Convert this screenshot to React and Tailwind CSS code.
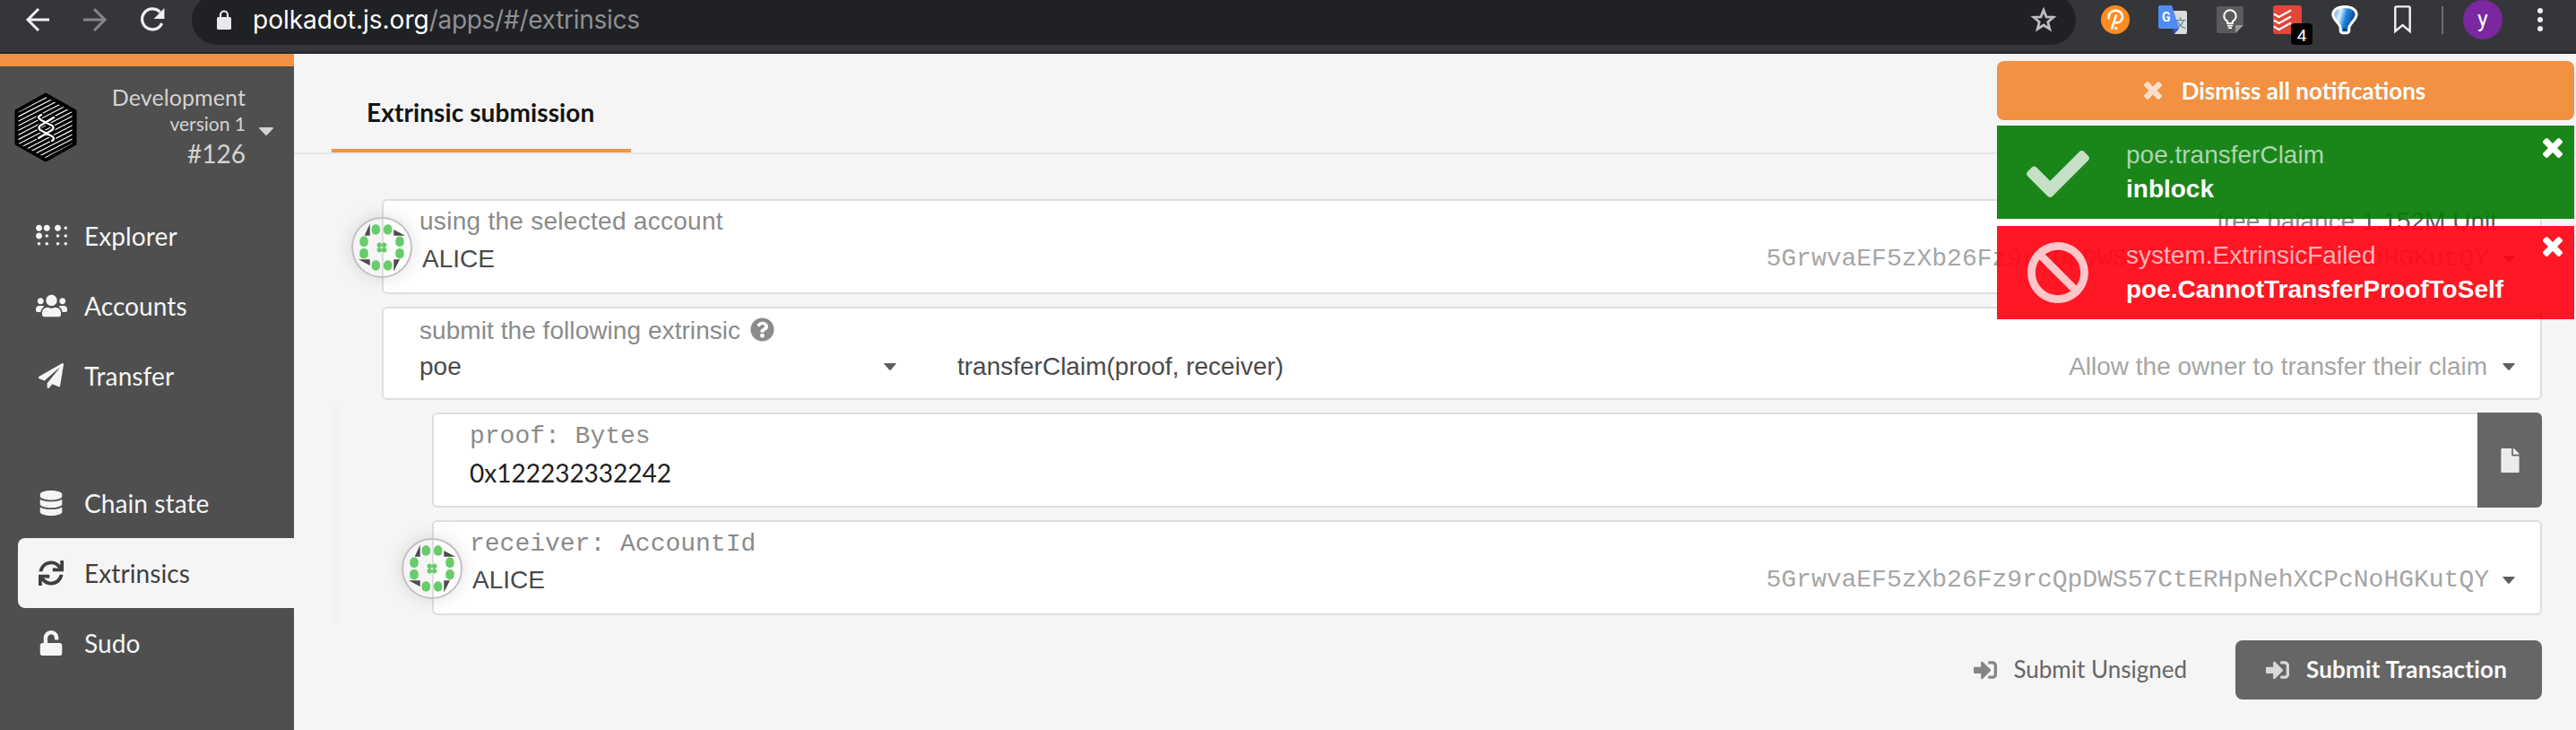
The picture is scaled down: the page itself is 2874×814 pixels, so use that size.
import React from 'react';
import {
  FaBraille,
  FaUsers,
  FaPaperPlane,
  FaDatabase,
  FaSync,
  FaUnlock,
  FaSignInAlt,
  FaFile,
  FaQuestionCircle,
  FaCheck,
  FaBan,
} from 'react-icons/fa';

const ADDRESS = '5GrwvaEF5zXb26Fz9rcQpDWS57CtERHpNehXCPcNoHGKutQY';

/* ---------- browser toolbar ---------- */

function Toolbar() {
  return (
    <header className="flex h-[60px] shrink-0 items-start overflow-hidden border-b-2 border-[#26272b] bg-[#35363a] font-['Inter',sans-serif]">
      <div className="flex h-[44px] items-center pl-[28px]">
        <svg className="mr-[36px] h-[28px] w-[28px]" viewBox="0 0 28 28" fill="none" stroke="#f1f1f1" strokeWidth="3">
          <path d="M27 14H3M15 2 3 14l12 12" />
        </svg>
        <svg className="mr-[36px] h-[28px] w-[28px]" viewBox="0 0 28 28" fill="none" stroke="#85868a" strokeWidth="3">
          <path d="M1 14h24M13 2l12 12-12 12" />
        </svg>
        <svg className="mr-[30px] h-[28px] w-[28px]" viewBox="0 0 28 28">
          <path d="M22.5 5.6A11.5 11.5 0 1 0 24.6 18" fill="none" stroke="#f1f1f1" strokeWidth="3.2" />
          <path d="M27.4 1v12H15.6z" fill="#f1f1f1" />
        </svg>
      </div>
      <div className="-mt-[6px] flex h-[56px] w-[2102px] items-center rounded-full bg-[#202124] pr-[21px] pl-[28px]">
        <svg className="h-[22px] w-[16px] shrink-0" viewBox="0 0 16 22">
          <path d="M4 10V5.5a4 4 0 0 1 8 0V10" fill="none" stroke="#e8e8e8" strokeWidth="2.2" />
          <rect y="8" width="16" height="14" rx="1.6" fill="#e8e8e8" />
        </svg>
        <span className="ml-[24px] text-[28px] leading-[36px] text-white">polkadot.js.org</span>
        <span className="grow text-[28px] leading-[36px] tracking-[-0.28px] text-[#8f9094]">/apps/#/extrinsics</span>
        <svg className="h-[30px] w-[30px] shrink-0" viewBox="0 0 30 30" fill="none" stroke="#bdbdbd" strokeWidth="2.8">
          <path d="M15 4.2l3 7.6 8 .5-6.200 5.200 2 7.900-6.800-4.400-6.800 4.400 2-7.900L4 12.300l8-.5z" />
        </svg>
      </div>
      <div className="flex h-[44px] items-center pl-[28px]">
        <svg className="h-[32px] w-[32px]" viewBox="0 0 32 32" fill="none">
          <circle cx="16" cy="16" r="16" fill="#ff8c22" />
          <path
            d="M8.600 14.400C8 9.500 11.800 5.700 16.400 5.700c4.400 0 7.600 3 7.600 6.900 0 4.300-3.300 7-7.400 6.800M16.800 11.300 12.200 25.600"
            stroke="#fff"
            strokeWidth="2.600"
            strokeLinecap="round"
          />
          <circle cx="16.800" cy="25.400" r="1.700" fill="#fff" />
        </svg>
        <svg className="ml-[32px] h-[32px] w-[32px]" viewBox="0 0 32 32">
          <path d="M13 6h17a2 2 0 0 1 2 2v22a2 2 0 0 1-2 2H18z" fill="#dcdcdc" />
          <text x="18" y="24" fontSize="13" fill="#5a8388" fontFamily="'Noto Sans CJK SC',sans-serif">文</text>
          <path d="M16 26h7l-5 6z" fill="#3a4fc4" />
          <path d="M1.500 0H15l8.500 26H2a2 2 0 0 1-2-2V1.500A1.500 1.500 0 0 1 1.500 0z" fill="#4f8df5" />
          <text x="4" y="18" fontSize="14" fontWeight="700" fill="#fff" fontFamily="Roboto,sans-serif">G</text>
        </svg>
        <svg className="ml-[32px] h-[32px] w-[32px]" viewBox="0 0 32 32" fill="none">
          <path d="M2.500 1h27a1.500 1.500 0 0 1 1.500 1.500V22l-9 9H2.500A1.500 1.500 0 0 1 1 29.500v-27A1.500 1.500 0 0 1 2.500 1z" fill="#5b5b5b" />
          <path d="M31 22l-9 9v-7.500a1.500 1.500 0 0 1 1.500-1.500z" fill="#9b9b9b" />
          <path d="M13 20v-2.300c-2-1.200-3.700-3.200-3.700-5.700a6.700 6.700 0 0 1 13.400 0c0 2.500-1.700 4.500-3.700 5.700V20z" stroke="#fff" strokeWidth="2" />
          <path d="M13 22.600h6M14 25.200h4" stroke="#fff" strokeWidth="1.800" />
        </svg>
        <div className="relative ml-[32px] h-[32px] w-[32px]">
          <svg className="h-[32px] w-[32px]" viewBox="0 0 32 32" fill="none" stroke="#fff" strokeWidth="2.200">
            <rect width="32" height="32" rx="3" fill="#e24539" stroke="none" />
            <path d="M1 9.500 6.500 13 20 5.500M1 16.500 6.500 20 20 12.500M1 23.500 6.500 27 20 19.500" />
          </svg>
          <span className="absolute top-[20px] left-[20px] h-[24px] w-[24px] rounded-[4px] bg-black text-center font-['Roboto'] text-[19px] leading-[27px] text-white">
            4
          </span>
        </div>
        <svg className="ml-[32px] h-[34px] w-[32px]" viewBox="0 0 32 34">
          <defs>
            <linearGradient id="balloon" x1="0" y1="0" x2="1" y2="0.300">
              <stop offset="0" stopColor="#2f8fe0" />
              <stop offset="0.350" stopColor="#dff0fc" />
              <stop offset="0.600" stopColor="#1c86e0" />
              <stop offset="1" stopColor="#0a3f8c" />
            </linearGradient>
          </defs>
          <path
            d="M16 2.500c8 0 13.200 3.600 13.200 8.500 0 3.800-3.300 7.200-6.200 10.600-1.200 1.500-2.200 3-2.200 4.900v2.600c0 1.600-1.100 2.600-2.500 2.600h-4.600c-1.400 0-2.500-1-2.500-2.600v-2.600c0-1.900-1-3.400-2.200-4.900C6.100 18.200 2.800 14.800 2.800 11 2.800 6.100 8 2.500 16 2.500z"
            fill="url(#balloon)"
            stroke="#fff"
            strokeWidth="3"
          />
          <path d="M14 26.500h4v3h-4z" fill="#123a6b" />
        </svg>
        <svg className="ml-[39px] h-[32px] w-[20px]" viewBox="0 0 20 32" fill="none" stroke="#f1f1f1" strokeWidth="2.400">
          <path d="M2.500 1.400h14a1.200 1.200 0 0 1 1.200 1.200V29L9.500 22 1.300 29V2.600a1.200 1.200 0 0 1 1.200-1.200z" />
        </svg>
        <div className="ml-[33px] h-[31px] w-[2px] bg-[#6d6e72]" />
        <div className="ml-[22px] flex h-[44px] w-[44px] items-center justify-center rounded-full bg-[#7b279f]">
          <span className="font-['Roboto'] text-[25px] leading-[40px] text-white">y</span>
        </div>
        <svg className="ml-[39px] h-[28px] w-[6px]" viewBox="0 0 6 28" fill="#f1f1f1">
          <circle cx="3" cy="4" r="3" />
          <circle cx="3" cy="14" r="3" />
          <circle cx="3" cy="24" r="3" />
        </svg>
      </div>
    </header>
  );
}

/* ---------- sidebar ---------- */

const STRIPES = Array.from({ length: 24 }, (_, i) => i * 5.1 - 6);

function ChainLogo() {
  return (
    <svg className="h-[78px] w-[70px]" viewBox="0 0 70 78">
      <defs>
        <clipPath id="hex-inner">
          <path d="M35 5 64.500 22v35L35 73 4.500 57V22z" />
        </clipPath>
      </defs>
      <path d="M35 2 68 20.500v37L35 76 2 57.500v-37z" fill="#000" stroke="#000" strokeWidth="3" strokeLinejoin="round" />
      <g clipPath="url(#hex-inner)" stroke="#fff" strokeWidth="1.150">
        {STRIPES.map((y) => (
          <path key={y} d={`M0 ${y + 20} 70 ${y - 16}`} />
        ))}
      </g>
      <g fill="none" strokeLinecap="round" strokeLinejoin="round">
        <path d="M30 25c-4 2-4 3 0 6l12 6q3 2.500 0 5L27 51M44 28 29 37q-3 2.500 0 5l13 7q4 3 0 5" stroke="#000" strokeWidth="5" />
        <path d="M30 25c-4 2-4 3 0 6l12 6q3 2.500 0 5L27 51M44 28 29 37q-3 2.500 0 5l13 7q4 3 0 5" stroke="#fff" strokeWidth="2.400" />
      </g>
    </svg>
  );
}

function NavItem({ icon: Icon, label, active, wide }) {
  return (
    <a
      className={
        active
          ? 'ml-[20px] flex h-[78px] items-center rounded-l-[8px] bg-[#f5f5f5] pl-[19px] text-[#3f3f3f]'
          : 'ml-[20px] flex h-[78px] items-center pl-[19px] text-[#f5f5f5]'
      }
    >
      <span className="flex w-[36px] justify-center">
        <Icon className={wide ? 'h-[28px] w-[35px] shrink-0' : 'h-[28px] w-[28px] shrink-0'} />
      </span>
      <span className="ml-[19px] text-[28px] leading-[34px] tracking-[0.100px]">{label}</span>
    </a>
  );
}

function Sidebar() {
  return (
    <aside className="flex w-[328px] shrink-0 flex-col border-t-[14px] border-[#f19141] bg-[#4f4f4f] font-['Lato',sans-serif]">
      <div className="flex h-[150px] shrink-0 items-start pl-[16px]">
        <div className="mt-[29px]">
          <ChainLogo />
        </div>
        <div className="mt-[19px] w-[188px] text-right text-[#d3d3d3]">
          <div className="text-[25px] leading-[31px] tracking-[0.100px]">Development</div>
          <div className="text-[21px] leading-[28px]">version 1</div>
          <div className="text-[28px] leading-[38px]">#126</div>
        </div>
        <svg className="mt-[68px] ml-[15px] h-[9px] w-[16px]" viewBox="0 0 16 9" fill="#d3d3d3">
          <path d="M1 0h14q1.500.3.500 1.500L9 8.500q-1 .9-2 0L.5 1.500Q-.5.300 1 0z" />
        </svg>
      </div>
      <nav className="flex flex-col">
        <NavItem icon={FaBraille} label="Explorer" wide />
        <NavItem icon={FaUsers} label="Accounts" wide />
        <NavItem icon={FaPaperPlane} label="Transfer" />
        <div className="h-[64px]" />
        <NavItem icon={FaDatabase} label="Chain state" />
        <NavItem icon={FaSync} label="Extrinsics" active />
        <NavItem icon={FaUnlock} label="Sudo" />
      </nav>
    </aside>
  );
}

/* ---------- form parts ---------- */

function Caret() {
  return (
    <svg className="h-[8px] w-[14px] shrink-0" viewBox="0 0 14 8" fill="#5f5f5f">
      <path d="M.8 0h12.400q1 .3.300 1.100L7.800 7.400q-.8.800-1.600 0L.5 1.100Q-.2.300.8 0z" />
    </svg>
  );
}

function Cross({ className }) {
  return (
    <svg className={className} viewBox="302 366 1188 1188" fill="currentColor">
      <path d="M1490 1322q0 40-28 68l-136 136q-28 28-68 28t-68-28l-294-294-294 294q-28 28-68 28t-68-28l-136-136q-28-28-28-68t28-68l294-294-294-294q-28-28-28-68t28-68l136-136q28-28 68-28t68 28l294 294 294-294q28-28 68-28t68 28l136 136q28 28 28 68t-28 68l-294 294 294 294q28 28 28 68z" />
    </svg>
  );
}

function Identicon() {
  return (
    <div className="absolute top-[18px] -left-[36px] h-[68px] w-[68px] rounded-full border-2 border-[#c1c1c1] shadow-[0_0_20px_rgba(0,0,0,0.130)]">
      <svg className="h-[64px] w-[64px]" viewBox="-32 -32 64 64">
        <g fill="#67cc6a">
          {[[-6.7, -20], [6.7, -20], [-6.7, 20], [6.7, 20], [-20, -6.7], [-20, 6.7], [20, -6.7], [20, 6.7]].map(([x, y]) => (
            <rect key={`${x},${y}`} x={x - 4.7} y={y - 5.7} width="9.400" height="11.400" rx="4.600" />
          ))}
          {[[-2.7, -2.7], [2.7, -2.7], [-2.7, 2.7], [2.7, 2.7]].map(([x, y]) => (
            <circle key={`${x},${y}`} cx={x} cy={y} r="2.700" />
          ))}
        </g>
        <path
          d="M-19.300-13.300h6v-13.300zM13.300-20v6.700H26zM13.300 13.300H20l-6.700 13.300zM-26 13.300h12.700V20z"
          fill="#4c4c4c"
        />
      </svg>
    </div>
  );
}

/* ---------- content ---------- */

function Content() {
  return (
    <main className="flex grow flex-col bg-[#f5f5f5] font-['Liberation_Sans',Arial,sans-serif] text-[28px] leading-[32px]">
      <div className="flex h-[112px] items-end border-b-2 border-[#e6e6e6] pl-[42px]">
        <div className="h-[70px] w-[334px] border-b-4 border-[#f19141] pl-[39px] font-['Lato'] leading-[50px] font-bold tracking-[0.100px] text-[#141414]">
          Extrinsic submission
        </div>
      </div>

      <div className="flex flex-col pt-[50px] pr-[38px] pl-[42px]">
        <div className="relative ml-[56px] h-[106px] rounded-[6px] border-2 border-[#dededf] bg-white pt-[7px] pr-[28px] pl-[40px]">
          <Identicon />
          <div className="flex justify-between">
            <span className="tracking-[0.280px] text-[#8b8b8b]">using the selected account</span>
            <span className="pr-[20px] text-[#8b8b8b]">
              free balance <span className="text-[#5c5c5c]">1.152M Unit</span>
            </span>
          </div>
          <div className="mt-[10px] flex items-center">
            <span className="ml-[3px] grow text-[#4a4a4a]">ALICE</span>
            <span className="mr-[15px] font-['Liberation_Mono'] text-[#a5a5a5]">{ADDRESS}</span>
            <Caret />
          </div>
        </div>

        <div className="mt-[14px] ml-[56px] h-[104px] rounded-[6px] border-2 border-[#dededf] bg-white pt-[9px] pr-[28px] pl-[40px]">
          <div className="flex text-[#8b8b8b]">
            <span className="tracking-[0.060px]">submit the following extrinsic</span>
            <FaQuestionCircle className="mt-px ml-[11px] h-[27px] w-[27px]" />
          </div>
          <div className="mt-[8px] flex items-center text-[#4a4a4a]">
            <span className="w-[518px]">poe</span>
            <Caret />
            <span className="ml-[68px] grow">transferClaim(proof, receiver)</span>
            <span className="mr-[17px] text-[#a5a5a5]">Allow the owner to transfer their claim</span>
            <Caret />
          </div>
        </div>

        <div className="mt-[6px] flex flex-col border-l-8 border-[#f2f2f2] pt-[8px] pb-[8px] pl-[104px]">
          <div className="flex h-[106px]">
            <div className="grow rounded-l-[6px] border-2 border-r-0 border-[#dededf] bg-white pt-[9px] pl-[40px]">
              <div className="font-['Liberation_Mono'] text-[#8b8b8b]">proof: Bytes</div>
              <div className="mt-[8px] font-['Lato'] text-[#202020]">0x122232332242</div>
            </div>
            <div className="flex w-[72px] items-center justify-center rounded-r-[6px] bg-[#666666] text-[#ececec]">
              <FaFile className="h-[27px] w-[21px]" />
            </div>
          </div>
          <div className="relative mt-[14px] h-[106px] rounded-[6px] border-2 border-[#dededf] bg-white pt-[9px] pr-[28px] pl-[40px]">
            <Identicon />
            <div className="font-['Liberation_Mono'] text-[#8b8b8b]">receiver: AccountId</div>
            <div className="mt-[8px] flex items-center">
              <span className="ml-[3px] grow text-[#4a4a4a]">ALICE</span>
              <span className="mr-[15px] font-['Liberation_Mono'] text-[#a5a5a5]">{ADDRESS}</span>
              <Caret />
            </div>
          </div>
        </div>

        <div className="mt-[20px] flex h-[66px] justify-end font-['Lato'] text-[26px] leading-[64px]">
          <div className="mr-[54px] flex items-center text-[#666666]">
            <FaSignInAlt className="mr-[18px] h-[26px] w-[26px] text-[#858585]" />
            <span className="h-[66px]">Submit Unsigned</span>
          </div>
          <div className="flex w-[342px] items-center rounded-[8px] bg-[#666666] pl-[34px] font-bold text-[#fafafa]">
            <FaSignInAlt className="mr-[19px] h-[26px] w-[26px] text-[#d9d9d9]" />
            <span className="h-[66px] tracking-[0.200px]">Submit Transaction</span>
          </div>
        </div>
      </div>
    </main>
  );
}

/* ---------- notifications ---------- */

function Notifications() {
  return (
    <div className="absolute top-[68px] right-[2px] flex w-[644px] flex-col font-['Liberation_Sans',Arial,sans-serif] text-[28px] leading-[38px] text-white">
      <div className="flex h-[66px] items-center justify-center rounded-[8px] bg-[#f19141] pr-[2px] font-['Lato'] text-[26px] font-bold">
        <Cross className="mr-[22px] h-[20px] w-[20px] text-[#fae0cb]" />
        Dismiss all notifications
      </div>
      <div className="mt-[6px] flex h-[104px] bg-[rgba(6,124,6,0.920)] pt-[14px] pr-[13px]">
        <FaCheck className="mt-[5px] ml-[33px] h-[70px] w-[70px] text-[#c6e0c6]" />
        <div className="ml-[41px] grow">
          <div className="text-[#add5ad]">poe.transferClaim</div>
          <div className="font-bold">inblock</div>
        </div>
        <Cross className="h-[22px] w-[22px]" />
      </div>
      <div className="mt-[8px] flex h-[104px] bg-[rgba(255,3,18,0.920)] pt-[14px] pr-[13px]">
        <FaBan className="mt-[3px] ml-[33px] h-[70px] w-[70px] text-[#ffc6ca]" />
        <div className="ml-[41px] grow">
          <div className="text-[#ffb0b5]">system.ExtrinsicFailed</div>
          <div className="font-bold">poe.CannotTransferProofToSelf</div>
        </div>
        <Cross className="-mt-[2px] h-[22px] w-[22px]" />
      </div>
    </div>
  );
}

export default function App() {
  return (
    <div className="relative flex h-[814px] w-[2874px] flex-col overflow-hidden">
      <Toolbar />
      <div className="flex grow">
        <Sidebar />
        <Content />
      </div>
      <Notifications />
    </div>
  );
}
